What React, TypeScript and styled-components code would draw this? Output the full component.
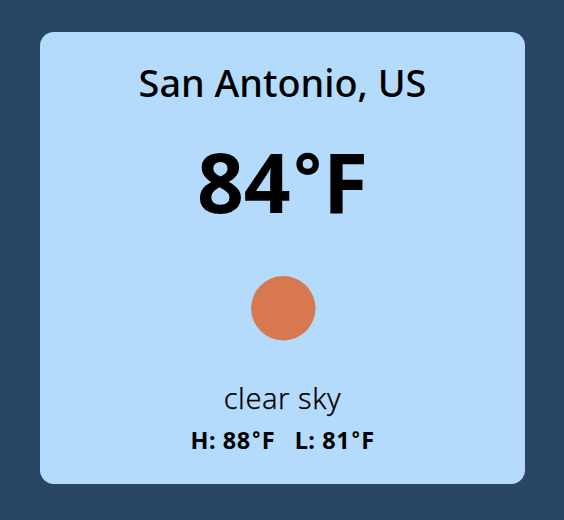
import React from "react";
import styled, { createGlobalStyle } from "styled-components";

const GlobalStyle = createGlobalStyle`
  * { box-sizing: border-box; }
  body { margin: 0; background: #274765; font-family: "Segoe UI", "Noto Sans", "Open Sans", sans-serif; color: #000; }
`;

const Page = styled.main`
  min-height: 100vh;
  padding: 32px 39px 0 40px;
`;

const Card = styled.section`
  height: 452px;
  border-radius: 14px;
  background: #b4dbfb;
  display: flex;
  flex-direction: column;
  align-items: center;
  white-space: nowrap;
`;

const City = styled.h1`
  margin: 24px 0 0;
  font-size: 37.8px;
  line-height: 54px;
  font-weight: 500;
`;

const Temperature = styled.div`
  margin-top: 21px;
  font-size: 82px;
  line-height: 100px;
  font-weight: 700;
`;

const Degree = styled.span`
  margin: 0 1.5px 0 3px;
  font-size: 0.8em;
  line-height: 0;
  vertical-align: 12px;
`;

const Icon = styled.svg`
  display: block;
  width: 66px;
  height: 66px;
  margin-top: 44px;
`;

const Condition = styled.p`
  margin: 38px 0 0;
  font-size: 29px;
  line-height: 38px;
  font-weight: 300;
  letter-spacing: 0.55px;
  -webkit-text-stroke: 0.25px #000;
`;

const Range = styled.div`
  display: flex;
  gap: 19.5px;
  margin-top: 7px;
  font-size: 23.5px;
  line-height: 32px;
  font-weight: 700;
  letter-spacing: 0.55px;

  ${Degree} {
    margin: 0 1px 0 1.5px;
    vertical-align: 3px;
  }
`;

export default function App() {
  return (
    <Page>
      <GlobalStyle />
      <Card>
        <City>San Antonio, US</City>
        <Temperature>84<Degree>°</Degree>F</Temperature>
        <Icon viewBox="0 0 66 66" aria-label="clear sky">
          <circle cx="33.3" cy="33.2" r="32.2" fill="#d87850" />
        </Icon>
        <Condition>clear sky</Condition>
        <Range>
          <span>H: 88<Degree>°</Degree>F</span>
          <span>L: 81<Degree>°</Degree>F</span>
        </Range>
      </Card>
    </Page>
  );
}
